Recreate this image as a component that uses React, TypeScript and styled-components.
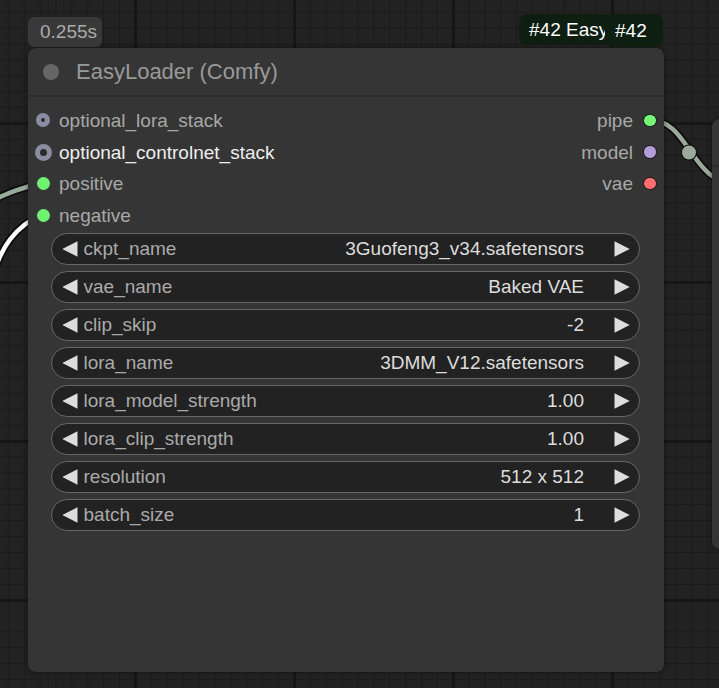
import React from "react";
import styled, { createGlobalStyle } from "styled-components";

const GlobalStyle = createGlobalStyle`
  html, body { margin: 0; padding: 0; background: #222; }
  body { font-family: "Liberation Sans", Arial, sans-serif; }
  * { box-sizing: border-box; }
`;

const Canvas = styled.div`
  position: relative;
  width: 719px;
  height: 688px;
  overflow: hidden;
  background-color: #222222;
  background-image:
    linear-gradient(to right, #161616 0 3px, transparent 3px),
    linear-gradient(to bottom, #161616 0 3px, transparent 3px),
    linear-gradient(to right, #1a1a1a 0 1px, transparent 1px),
    linear-gradient(to bottom, #1a1a1a 0 1px, transparent 1px);
  background-size: 159px 100%, 100% 159px, 15.9px 100%, 100% 15.9px;
  background-position: 134px 0, 0 122px, 7.8px 0, 0 11.7px;
  font-family: "Liberation Sans", Arial, sans-serif;
`;

const Wires = styled.svg`
  position: absolute;
  left: 0;
  top: 0;
`;

const Node = styled.div<{ $x: number; $y: number; $w: number; $h: number }>`
  position: absolute;
  left: ${(p) => p.$x}px;
  top: ${(p) => p.$y}px;
  width: ${(p) => p.$w}px;
  height: ${(p) => p.$h}px;
  background: #353535;
  border-radius: 8px;
  box-shadow: 0 0 4px rgba(0, 0, 0, 0.55);
  display: flex;
  flex-direction: column;
`;

const TitleBar = styled.div<{ $h: number }>`
  height: ${(p) => p.$h}px;
  flex: none;
  display: flex;
  align-items: center;
  gap: 17px;
  padding-left: 15px;
  border-bottom: 2px solid #2c2c2c;
`;

const TitleDot = styled.span`
  width: 16px;
  height: 16px;
  border-radius: 50%;
  background: #666666;
  flex: none;
`;

const TitleText = styled.span`
  font-size: 22px;
  color: #999999;
  white-space: nowrap;
`;

const TimeBadge = styled.div`
  position: absolute;
  left: 0;
  top: -31px;
  height: 30px;
  width: 74px;
  border-radius: 6px;
  background: #383838;
  color: #aaaaaa;
  font-size: 19px;
  display: flex;
  align-items: center;
  padding-left: 12px;
`;

const IdBadges = styled.div`
  position: absolute;
  right: 1px;
  top: -34px;
  display: flex;
  align-items: flex-start;
`;

const IdBadge = styled.div<{ $w: number; $h: number; $front?: boolean }>`
  width: ${(p) => p.$w}px;
  height: ${(p) => p.$h}px;
  background: #0e1e10;
  border-radius: 8px;
  color: #ffffff;
  font-size: 19px;
  white-space: nowrap;
  overflow: hidden;
  display: flex;
  align-items: center;
  padding-left: 10px;
  position: relative;
  z-index: ${(p) => (p.$front ? 1 : 0)};
  margin-left: ${(p) => (p.$front ? -6 : 0)}px;
`;

const Slots = styled.div`
  display: flex;
  justify-content: space-between;
  padding: 7.5px 6px 0 7px;
`;

const SlotColumn = styled.div<{ $right?: boolean }>`
  display: flex;
  flex-direction: column;
  align-items: ${(p) => (p.$right ? "flex-end" : "flex-start")};
`;

const SlotRow = styled.div<{ $right?: boolean }>`
  height: 31.7px;
  display: flex;
  align-items: center;
  flex-direction: ${(p) => (p.$right ? "row-reverse" : "row")};
  gap: ${(p) => (p.$right ? 9 : 8)}px;
`;

const DotBox = styled.span`
  width: 16px;
  height: 16px;
  display: flex;
  align-items: center;
  justify-content: center;
  flex: none;
`;

const Dot = styled.span<{ $color: string; $size: number; $ring?: number; $outline?: boolean }>`
  width: ${(p) => p.$size}px;
  height: ${(p) => p.$size}px;
  border-radius: 50%;
  background: ${(p) => (p.$ring ? "#2b2b2b" : p.$color)};
  border: ${(p) =>
    p.$ring
      ? `${p.$ring}px solid ${p.$color}`
      : p.$outline
      ? "1.5px solid #111"
      : "none"};
  flex: none;
`;

const SlotLabel = styled.span<{ $bright?: boolean }>`
  font-size: 19px;
  color: ${(p) => (p.$bright ? "#eeeeee" : "#a8a8a8")};
  white-space: nowrap;
  line-height: 1;
`;

const Widgets = styled.div`
  display: flex;
  flex-direction: column;
  gap: 6px;
  padding: 1.5px 24px 0 23px;
`;

const Widget = styled.div`
  height: 32px;
  border-radius: 16px;
  background: #222222;
  border: 1.5px solid #666666;
  display: flex;
  align-items: center;
  padding: 0 9px 0 9.5px;
  font-size: 19px;
`;

const Arrow = styled.svg`
  flex: none;
  display: block;
`;

const WidgetLabel = styled.span`
  color: #aaaaaa;
  margin-left: 6px;
  white-space: nowrap;
`;

const WidgetValue = styled.span`
  color: #dddddd;
  margin-left: auto;
  margin-right: 30px;
  white-space: nowrap;
`;

const inputs = [
  { name: "optional_lora_stack", color: "#8c8ca2", size: 14, ring: 5 },
  { name: "optional_controlnet_stack", color: "#8c8ca2", size: 17, ring: 5, bright: true },
  { name: "positive", color: "#6ff26f", size: 13 },
  { name: "negative", color: "#6ff26f", size: 13 },
];

const outputs = [
  { name: "pipe", color: "#77f777" },
  { name: "model", color: "#b39ddb" },
  { name: "vae", color: "#ff6e6e" },
];

const widgets = [
  { name: "ckpt_name", value: "3Guofeng3_v34.safetensors" },
  { name: "vae_name", value: "Baked VAE" },
  { name: "clip_skip", value: "-2" },
  { name: "lora_name", value: "3DMM_V12.safetensors" },
  { name: "lora_model_strength", value: "1.00" },
  { name: "lora_clip_strength", value: "1.00" },
  { name: "resolution", value: "512 x 512" },
  { name: "batch_size", value: "1" },
];

const LeftArrow = () => (
  <Arrow width="16" height="16" viewBox="0 0 16 16">
    <polygon points="15.5,0.3 15.5,15.7 0.3,8" fill="#dddddd" />
  </Arrow>
);

const RightArrow = () => (
  <Arrow width="16" height="16" viewBox="0 0 16 16">
    <polygon points="0.5,0.3 0.5,15.7 15.7,8" fill="#dddddd" />
  </Arrow>
);

const Wire = ({ d, color }: { d: string; color: string }) => (
  <g fill="none" strokeLinecap="round">
    <path d={d} stroke="#0c0c0c" strokeWidth={8} />
    <path d={d} stroke={color} strokeWidth={4.5} />
  </g>
);

export default function App() {
  return (
    <>
      <GlobalStyle />
      <Canvas>
        <Wires width={719} height={688} viewBox="0 0 719 688">
          <Wire d="M -30 210 C -5 200, 15 188, 43 183" color="#9aaa9a" />
          <Wire d="M -8 280 C 0 248, 15 226, 43 214" color="#ffffff" />
          <Wire d="M 650 120 C 690 120, 690 185, 740 185" color="#9aaa9a" />
          <circle cx={689} cy={152.5} r={8} fill="#0c0c0c" />
          <circle cx={689} cy={152.5} r={7} fill="#9aaa9a" />
        </Wires>

        <Node $x={712} $y={119} $w={120} $h={430}>
          <TitleBar $h={48} />
        </Node>

        <Node $x={28} $y={48} $w={636} $h={624}>
          <TimeBadge>0.255s</TimeBadge>
          <IdBadges>
            <IdBadge $w={92} $h={31}>#42 EasyLoader (Comfy)</IdBadge>
            <IdBadge $w={58} $h={33} $front>
              #42
            </IdBadge>
          </IdBadges>
          <TitleBar $h={49}>
            <TitleDot />
            <TitleText>EasyLoader (Comfy)</TitleText>
          </TitleBar>
          <Slots>
            <SlotColumn>
              {inputs.map((s) => (
                <SlotRow key={s.name}>
                  <DotBox>
                    <Dot $color={s.color} $size={s.size} $ring={s.ring} />
                  </DotBox>
                  <SlotLabel $bright={s.bright}>{s.name}</SlotLabel>
                </SlotRow>
              ))}
            </SlotColumn>
            <SlotColumn $right>
              {outputs.map((s) => (
                <SlotRow key={s.name} $right>
                  <DotBox>
                    <Dot $color={s.color} $size={13.5} $outline />
                  </DotBox>
                  <SlotLabel>{s.name}</SlotLabel>
                </SlotRow>
              ))}
            </SlotColumn>
          </Slots>
          <Widgets>
            {widgets.map((w) => (
              <Widget key={w.name}>
                <LeftArrow />
                <WidgetLabel>{w.name}</WidgetLabel>
                <WidgetValue>{w.value}</WidgetValue>
                <RightArrow />
              </Widget>
            ))}
          </Widgets>
        </Node>
      </Canvas>
    </>
  );
}
